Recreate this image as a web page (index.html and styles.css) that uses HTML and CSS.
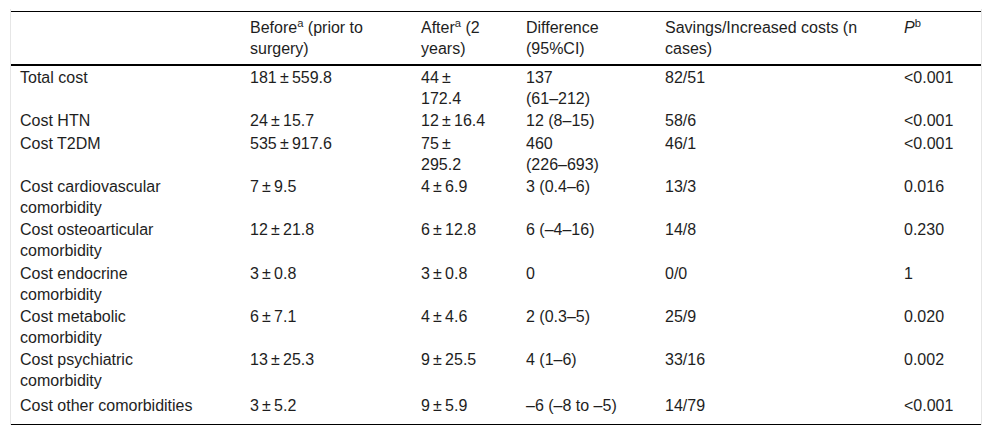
FILE: index.html
```html
<!DOCTYPE html>
<html lang="en">
<head>
<meta charset="utf-8">
<title>Costs before and after surgery</title>
<link rel="stylesheet" href="styles.css">
</head>
<body>
<div class="table-wrap">
  <table class="costs">
    <colgroup>
      <col class="w1"><col class="w2"><col class="w3"><col class="w4"><col class="w5"><col class="w6">
    </colgroup>
    <thead>
      <tr>
        <th></th>
        <th>Before<sup>a</sup> (prior to surgery)</th>
        <th>After<sup>a</sup> (2 years)</th>
        <th>Difference (95%CI)</th>
        <th>Savings/Increased costs (n cases)</th>
        <th><i>P</i><sup>b</sup></th>
      </tr>
    </thead>
    <tbody>
      <tr><td>Total cost</td><td>181&#8201;±&#8201;559.8</td><td>44&#8201;±&#8201;172.4</td><td>137 <span class="range">(61–212)</span></td><td>82/51</td><td>&lt;0.001</td></tr>
      <tr><td>Cost HTN</td><td>24&#8201;±&#8201;15.7</td><td>12&#8201;±&#8201;16.4</td><td>12 <span class="range">(8–15)</span></td><td>58/6</td><td>&lt;0.001</td></tr>
      <tr><td>Cost T2DM</td><td>535&#8201;±&#8201;917.6</td><td>75&#8201;±&#8201;295.2</td><td>460 <span class="range">(226–693)</span></td><td>46/1</td><td>&lt;0.001</td></tr>
      <tr><td>Cost cardiovascular comorbidity</td><td>7&#8201;±&#8201;9.5</td><td>4&#8201;±&#8201;6.9</td><td>3 <span class="range">(0.4–6)</span></td><td>13/3</td><td>0.016</td></tr>
      <tr><td>Cost osteoarticular comorbidity</td><td>12&#8201;±&#8201;21.8</td><td>6&#8201;±&#8201;12.8</td><td>6 <span class="range">(–4–16)</span></td><td>14/8</td><td>0.230</td></tr>
      <tr><td>Cost endocrine comorbidity</td><td>3&#8201;±&#8201;0.8</td><td>3&#8201;±&#8201;0.8</td><td>0</td><td>0/0</td><td>1</td></tr>
      <tr><td>Cost metabolic comorbidity</td><td>6&#8201;±&#8201;7.1</td><td>4&#8201;±&#8201;4.6</td><td>2 <span class="range">(0.3–5)</span></td><td>25/9</td><td>0.020</td></tr>
      <tr><td>Cost psychiatric comorbidity</td><td>13&#8201;±&#8201;25.3</td><td>9&#8201;±&#8201;25.5</td><td>4 <span class="range">(1–6)</span></td><td>33/16</td><td>0.002</td></tr>
      <tr><td>Cost other comorbidities</td><td>3&#8201;±&#8201;5.2</td><td>9&#8201;±&#8201;5.9</td><td>–6 <span class="range">(–8 to –5)</span></td><td>14/79</td><td>&lt;0.001</td></tr>
    </tbody>
  </table>
</div>
</body>
</html>
```

FILE: styles.css
```css
html, body {
  margin: 0;
  padding: 0;
  background: #fff;
}

body {
  font-family: "Liberation Sans", Arial, sans-serif;
  font-size: 16px;
  color: #1e1e1e;
}

.table-wrap {
  margin: 9px 10px 0 10px;
  padding-top: 2px;
  border-left: 1px solid #e6e6e6;
  border-right: 1px solid #e6e6e6;
}

.costs {
  width: 970px;
  table-layout: fixed;
  border-collapse: separate;
  border-spacing: 0;
  border-top: 1px solid #000;
  border-bottom: 1px solid #000;
}

.w1 { width: 230px; }
.w2 { width: 171px; }
.w3 { width: 105px; }
.w4 { width: 139px; }
.w5 { width: 239px; }
.w6 { width: 86px; }

.costs th,
.costs td {
  text-align: left;
  vertical-align: top;
  font-weight: normal;
  line-height: 21px;
  padding-left: 9px;
  padding-right: 20px;
}

.costs th {
  padding-top: 5px;
  padding-bottom: 5px;
  border-bottom: 2px solid #000;
}

.costs td {
  padding-top: 1px;
  padding-bottom: 0.33px;
}

.costs tbody tr:last-child td {
  padding-top: 3px;
  padding-bottom: 8.4px;
}

.costs th:nth-child(1),
.costs td:nth-child(1) { padding-right: 40px; }
.costs th:nth-child(3),
.costs td:nth-child(3) { padding-right: 27px; }
.costs th:nth-child(4),
.costs td:nth-child(4) { padding-right: 36px; }

.range {
  white-space: nowrap;
}

.costs sup {
  font-size: 0.7em;
  line-height: 0;
  vertical-align: super;
}
```
